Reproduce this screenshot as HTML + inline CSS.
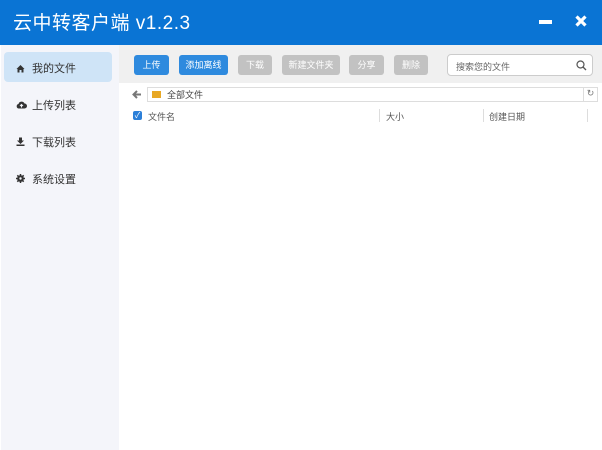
<!DOCTYPE html><html><head><meta charset="utf-8"><style>
*{margin:0;padding:0;box-sizing:border-box}
body{width:602px;height:450px;overflow:hidden;background:#fff;font-family:"Liberation Sans","Noto Sans CJK SC",sans-serif;position:relative}
.a{position:absolute}
.hd{left:0;top:0;width:602px;height:45px;background:#0a74d4;color:#fff}
.side{left:1px;top:45px;width:118px;height:405px;background:#f4f5fa}
.tb{left:119px;top:45px;width:483px;height:38px;background:#f0f0f0}
.btn{top:55px;height:20px;border-radius:3px;color:#fff;font-size:9px;line-height:20px;text-align:center}
.bl{background:#2e8ade}.gr{background:#c2c2c2}
.si{font-size:11px;color:#333;left:32px}
.ic{position:absolute;left:16px}
.t{font-size:9px;color:#555}
</style></head><body>
<div class="a hd"><div class="a" style="left:13px;top:8px;font-size:19px;letter-spacing:0.5px">云中转客户端 v1.2.3</div>
<div class="a" style="left:539px;top:20px;width:13px;height:4px;background:#fff"></div>
<svg class="a" style="left:575px;top:15px" width="12" height="12"><path d="M1.5 1.5L10.5 10.5M10.5 1.5L1.5 10.5" stroke="#fff" stroke-width="3.2"/></svg></div>
<div class="a side"></div>
<div class="a" style="left:4px;top:52px;width:108px;height:30px;background:#cfe4f7;border-radius:4px"></div>
<svg class="ic" style="top:64px" width="9" height="9"><path d="M0.5 5L4.5 1L8.5 5H7.5V8.5H5.5V6H3.5V8.5H1.5V5Z" fill="#333"/></svg>
<div class="a si" style="top:60px">我的文件</div>
<svg class="ic" style="top:100px" width="11" height="9"><path d="M2.5 8.5A2.3 2.3 0 0 1 2.5 4A3.2 3.2 0 0 1 8.5 3.5A2.5 2.5 0 0 1 8.5 8.5Z" fill="#333"/><path d="M5.5 7.5V4.5M4 6L5.5 4.5L7 6" stroke="#f4f5fa" stroke-width="1"/></svg>
<div class="a si" style="top:97px">上传列表</div>
<svg class="ic" style="top:137px" width="9" height="9"><path d="M3 0.5H6V3.5H8L4.5 7L1 3.5H3Z" fill="#333"/><rect x="0.5" y="7.5" width="8" height="1.5" fill="#333"/></svg>
<div class="a si" style="top:134px">下载列表</div>
<svg class="ic" style="top:174px" width="9" height="9"><circle cx="4.5" cy="4.5" r="3.3" fill="#333"/><path d="M4.5 0V9M0 4.5H9M1.3 1.3L7.7 7.7M7.7 1.3L1.3 7.7" stroke="#333" stroke-width="1.5"/><circle cx="4.5" cy="4.5" r="1.2" fill="#f4f5fa"/></svg>
<div class="a si" style="top:171px">系统设置</div>
<div class="a tb"></div>
<div class="a btn bl" style="left:134px;width:35px">上传</div>
<div class="a btn bl" style="left:179px;width:49px">添加离线</div>
<div class="a btn gr" style="left:238px;width:34px">下载</div>
<div class="a btn gr" style="left:282px;width:58px">新建文件夹</div>
<div class="a btn gr" style="left:349px;width:35px">分享</div>
<div class="a btn gr" style="left:394px;width:34px">删除</div>
<div class="a" style="left:447px;top:54px;width:146px;height:22px;background:#fff;border:1px solid #ccc;border-radius:4px"><span class="a t" style="left:8px;top:5px;color:#666">搜索您的文件</span>
<svg class="a" style="right:5px;top:5px" width="11" height="11"><circle cx="4.5" cy="4.5" r="3.5" fill="none" stroke="#555" stroke-width="1.2"/><path d="M7 7L10 10" stroke="#555" stroke-width="1.3"/></svg></div>
<svg class="a" style="left:132px;top:90px" width="10" height="9"><path d="M9 4.5H2M5 1L1.5 4.5L5 8" stroke="#777" stroke-width="2" fill="none"/></svg>
<div class="a" style="left:147px;top:87px;width:451px;height:15px;border:1px solid #ddd"><div class="a" style="left:4px;top:3px;width:9px;height:7px;background:#e8a825"></div><span class="a t" style="left:19px;top:0px;color:#444">全部文件</span><div class="a" style="right:0;top:0;width:14px;height:13px;border-left:1px solid #ddd;font-size:9px;color:#777;text-align:center">↻</div></div>
<div class="a" style="left:133px;top:111px;width:9px;height:9px;background:#2b7fd8;border-radius:2px;color:#fff;font-size:8px;line-height:9px;text-align:center">✓</div>
<div class="a t" style="left:148px;top:110px">文件名</div>
<div class="a" style="left:379px;top:109px;width:1px;height:13px;background:#ddd"></div>
<div class="a t" style="left:386px;top:110px">大小</div>
<div class="a" style="left:483px;top:109px;width:1px;height:13px;background:#ddd"></div>
<div class="a t" style="left:489px;top:110px">创建日期</div>
<div class="a" style="left:587px;top:109px;width:1px;height:13px;background:#ddd"></div>
</body></html>
